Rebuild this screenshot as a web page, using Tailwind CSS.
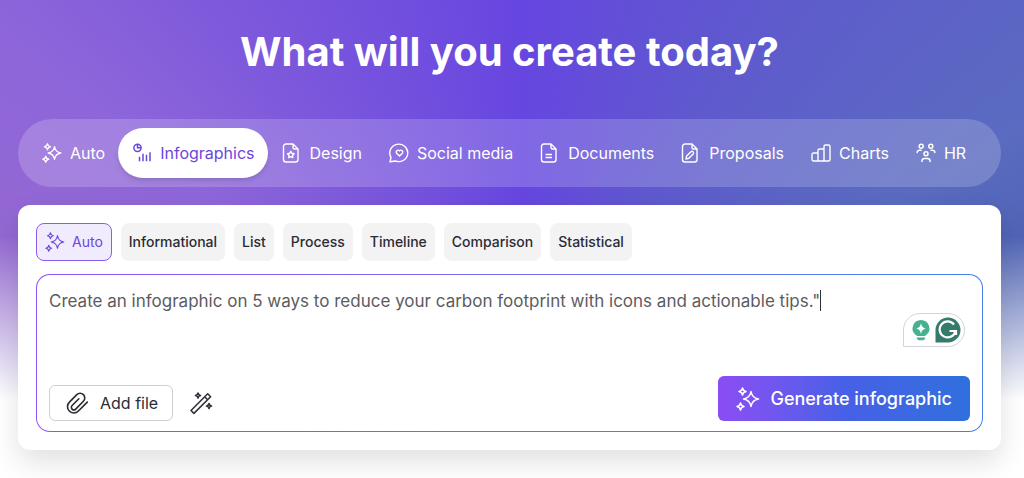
<!DOCTYPE html>
<html lang="en">
<head>
  <meta charset="UTF-8" />
  <meta name="viewport" content="width=device-width, initial-scale=1.0" />
  <title>What will you create today?</title>
  <script src="https://cdn.jsdelivr.net/npm/@tailwindcss/browser@4"></script>
</head>
<body class="min-h-screen bg-[linear-gradient(to_bottom,transparent_236px,white_400px),conic-gradient(from_0deg_at_51%_440px,#6646e0_0deg,#5f59ce_28deg,#5a6bc0_58deg,#4f63b4_69deg,#4f63b4_180deg,#9468d2_290deg,#8e66da_308deg,#7f5adb_323deg,#6646e0_360deg)] font-['Inter','Liberation_Sans',sans-serif]">

  <!-- Shared icon -->
  <svg class="hidden">
    <symbol id="sparkles" viewBox="0 0 24 24" fill="none" stroke="currentColor" stroke-linejoin="round">
      <path d="M15 4.5c.8 4.8 2.700 6.700 7.500 7.500-4.800.8-6.700 2.700-7.500 7.500-.8-4.800-2.700-6.700-7.500-7.500 4.800-.8 6.700-2.700 7.500-7.500z" />
      <path d="M6.500 1c.4 2.200 1.300 3.100 3.500 3.500-2.200.4-3.100 1.300-3.500 3.500-.4-2.200-1.300-3.100-3.500-3.500 2.200-.4 3.100-1.300 3.500-3.500z" />
      <path d="M4.500 16c.4 2.200 1.300 3.100 3.500 3.500-2.200.4-3.100 1.300-3.500 3.500-.4-2.200-1.300-3.100-3.500-3.500 2.200-.4 3.100-1.300 3.500-3.500z" />
    </symbol>
  </svg>

  <main class="pt-6 pr-[23px] pb-7 pl-[18px]">
    <h1 class="text-center text-[40px] leading-14 font-bold text-white">What will you create today?</h1>

    <!-- Categories -->
    <nav class="mt-[39px] flex h-[68px] items-center rounded-full bg-white/18 px-[10px] text-base whitespace-nowrap text-white">
      <button class="flex h-[50px] items-center gap-2 rounded-full pr-[13px] pl-[14px]">
        <svg class="size-5" stroke-width="1.700"><use href="#sparkles" /></svg>
        Auto
      </button>
      <button class="flex h-[50px] items-center gap-2 rounded-full bg-white pr-[13px] pl-[14px] text-[#6b47dc] shadow-md">
        <svg class="size-5" viewBox="0 0 20 20" fill="none" stroke="currentColor" stroke-width="1.500">
          <circle cx="5.500" cy="4.800" r="3.600" />
          <path d="M5.500 1.200v3.600h3.600M7.500 18.300v-4.500M11 18.300v-7.500M14.500 18.300v-6.500M18 18.300V9.300" />
        </svg>
        Infographics
      </button>
      <button class="flex h-[50px] items-center gap-2 rounded-full pr-[13px] pl-[14px]">
        <svg class="size-5" viewBox="0 0 20 20" fill="none" stroke="currentColor" stroke-width="1.400" stroke-linejoin="round">
          <path d="M11 1H4a2.500 2.500 0 0 0-2.500 2.500v13A2.500 2.500 0 0 0 4 19h9.500a2.500 2.500 0 0 0 2.500-2.500V6zM11 1v3.500A1.500 1.500 0 0 0 12.500 6H16" />
          <path d="M8.800 8.300l1 2 2.300.4-1.600 1.700.3 2.300-2-1-2 1 .3-2.300-1.600-1.700 2.300-.4z" />
        </svg>
        Design
      </button>
      <button class="flex h-[50px] items-center gap-2 rounded-full pr-[13px] pl-[14px]">
        <svg class="size-5" viewBox="0 0 20 20" fill="none" stroke="currentColor" stroke-width="1.400" stroke-linejoin="round">
          <path d="M1 18.800l1-4.500A9 8.700 0 1 1 6.500 18z" />
          <path d="M10.500 13L7.600 10.200C6.200 8.400 8.800 5.900 10.500 7.900c1.700-2 4.300.5 2.900 2.300z" />
        </svg>
        Social media
      </button>
      <button class="flex h-[50px] items-center gap-2 rounded-full pr-[13px] pl-[14px]">
        <svg class="size-5" viewBox="0 0 20 20" fill="none" stroke="currentColor" stroke-width="1.400" stroke-linejoin="round">
          <path d="M11 1H4a2.500 2.500 0 0 0-2.500 2.500v13A2.500 2.500 0 0 0 4 19h9.500a2.500 2.500 0 0 0 2.500-2.500V6zM11 1v3.500A1.500 1.500 0 0 0 12.500 6H16M5.500 11.500H12M5.500 14.500H12" />
        </svg>
        Documents
      </button>
      <button class="flex h-[50px] items-center gap-2 rounded-full pr-[13px] pl-[14px]">
        <svg class="size-5" viewBox="0 0 20 20" fill="none" stroke="currentColor" stroke-width="1.400" stroke-linejoin="round">
          <path d="M11 1H4a2.500 2.500 0 0 0-2.500 2.500v13A2.500 2.500 0 0 0 4 19h9.500a2.500 2.500 0 0 0 2.500-2.500V6zM11 1v3.500A1.500 1.500 0 0 0 12.500 6H16" />
          <path d="M5 16l.6-2.900 4.400-4.400c1.500-1.200 3.300.6 2.200 2.200l-4.400 4.400z" />
        </svg>
        Proposals
      </button>
      <button class="flex h-[50px] items-center gap-2 rounded-full pr-[13px] pl-[14px]">
        <svg class="size-5" viewBox="0 0 20 20" fill="none" stroke="currentColor" stroke-width="1.400" stroke-linejoin="round">
          <path d="M7 18H2.500A1.500 1.500 0 0 1 1 16.500V11.500A1.500 1.500 0 0 1 2.500 10H7zM13 18H7V7.500A1.500 1.500 0 0 1 8.500 6H13zM13 18V3.500A1.500 1.500 0 0 1 14.500 2h3A1.500 1.500 0 0 1 19 3.500v13a1.500 1.500 0 0 1-1.500 1.500z" />
        </svg>
        Charts
      </button>
      <button class="flex h-[50px] items-center gap-2 rounded-full pr-[13px] pl-[14px]">
        <svg class="size-5" viewBox="0 0 20 20" fill="none" stroke="currentColor" stroke-width="1.500" stroke-linecap="round">
          <circle cx="5.200" cy="3.200" r="2" />
          <circle cx="14.800" cy="3.200" r="2" />
          <circle cx="10" cy="10.800" r="2" />
          <path d="M1.200 9.500c0-1.400.9-2.200 2.300-2.200h1.500M18.800 9.500c0-1.400-.9-2.200-2.300-2.200h-1.500M6 18.600v-.8c0-1.500 1-2.400 2.500-2.400h3c1.500 0 2.500.9 2.500 2.400v.8" />
        </svg>
        HR
      </button>
    </nav>

    <!-- Prompt card -->
    <section class="mt-[18px] rounded-xl bg-white p-[18px] shadow-[0_12px_28px_rgba(0,0,0,0.12)]">
      <div class="flex gap-[9px] text-sm font-medium text-[#2b2b35]">
        <button class="flex h-[38px] items-center gap-[7px] rounded-lg border border-[#8a5cf0] bg-[#f0ebfd] px-2 font-normal text-[#6b47dc]">
          <svg class="size-5" stroke-width="1.500"><use href="#sparkles" /></svg>
          Auto
        </button>
        <button class="h-[38px] rounded-lg bg-[#f3f3f3] px-2">Informational</button>
        <button class="h-[38px] rounded-lg bg-[#f3f3f3] px-2">List</button>
        <button class="h-[38px] rounded-lg bg-[#f3f3f3] px-2">Process</button>
        <button class="h-[38px] rounded-lg bg-[#f3f3f3] px-2">Timeline</button>
        <button class="h-[38px] rounded-lg bg-[#f3f3f3] px-2">Comparison</button>
        <button class="h-[38px] rounded-lg bg-[#f3f3f3] px-2">Statistical</button>
      </div>

      <div class="mt-[13px] rounded-[14px] bg-linear-to-r from-[#9150f5] to-[#4080e8] p-px">
        <div class="relative rounded-[13px] bg-white px-3 pt-[13px] pb-[10px]">
          <div class="flex h-[88px]">
            <textarea aria-label="Prompt" rows="1" class="field-sizing-content h-[26px] resize-none overflow-hidden text-[17px] leading-[26px] whitespace-nowrap text-[#5c5c60] outline-none">Create an infographic on 5 ways to reduce your carbon footprint with icons and actionable tips."</textarea>
            <span class="mt-[2px] h-[21px] w-px bg-[#333]"></span>
          </div>

          <div class="absolute top-[38px] right-[17px] flex h-[34px] w-[62px] items-center justify-center gap-1 rounded-full rounded-bl-none border border-[#d3d3de] bg-white pl-1">
            <svg class="h-6 w-5" viewBox="0 0 20 24">
              <path d="M10 2a8.500 8.500 0 0 0-5 15.300c.8.600 1 .7 1.600.7h6.800c.6 0 .8-.1 1.600-.7A8.500 8.500 0 0 0 10 2zM5.800 19.500h8.400c0 1.700-1 2.700-2.500 2.700H8.300c-1.500 0-2.500-1-2.500-2.700z" fill="#46b090" />
              <path d="M10 5c.7 3.600 1.900 4.800 5 5.500-3.100.7-4.300 1.900-5 5.500-.7-3.600-1.900-4.800-5-5.500 3.100-.7 4.300-1.900 5-5.500z" fill="white" />
            </svg>
            <svg class="size-[26px]" viewBox="0 0 26 26" fill="none">
              <path d="M13 .5A12.500 12.500 0 0 1 13 25.500H.5V13A12.500 12.500 0 0 1 13 .5z" fill="#357b6c" />
              <path d="M19 7.500A8 8 0 1 0 20.500 14H14.500M17 14h4v4" stroke="white" stroke-width="2.200" />
            </svg>
          </div>

          <div class="flex items-end">
            <button class="flex h-9 items-center gap-[10px] rounded-md border border-[#cfcfd2] px-[14px] text-base text-[#2b2b35]">
              <svg class="size-[26px]" viewBox="0 0 24 24" fill="none" stroke="currentColor" stroke-width="1.500" stroke-linecap="round" stroke-linejoin="round">
                <path d="M21.500 11.200l-8.200 8.200a5.800 5.800 0 0 1-8.600-.2 5.800 5.800 0 0 1 .3-8l6.800-6.900a4.300 4.300 0 0 1 6.100 6.100l-7.100 7.200a2.300 2.300 0 0 1-3.300-3.300l6.200-6.200" />
              </svg>
              Add file
            </button>
            <button aria-label="Improve prompt" class="mb-[6px] ml-4 text-[#33333d]">
              <svg class="size-6" viewBox="0 0 24 24" fill="none" stroke="currentColor" stroke-width="1.600" stroke-linejoin="round">
                <path d="M2 19.500L18.700 2.800l2.900 2.900L4.900 22.400zM15.700 5.800l2.900 2.900" />
                <path d="M9 2c.3 1.600.9 2.200 2.500 2.500C9.900 4.800 9.300 5.400 9 7c-.3-1.600-.9-2.200-2.500-2.500C8.100 4.200 8.700 3.600 9 2zM20 12.500c.3 1.600.9 2.200 2.500 2.500-1.600.3-2.200.9-2.500 2.500-.3-1.600-.9-2.200-2.500-2.500 1.600-.3 2.200-.9 2.500-2.500z" />
              </svg>
            </button>
            <button class="ml-auto flex h-[45px] items-center gap-[10px] rounded-md bg-linear-to-r from-[#8b4cf5] via-[#4660e6] to-[#2f70dd] px-[18px] text-lg font-medium whitespace-nowrap text-white">
              <svg class="size-6" stroke-width="1.500"><use href="#sparkles" /></svg>
              Generate infographic
            </button>
          </div>
        </div>
      </div>
    </section>
  </main>
</body>
</html>
